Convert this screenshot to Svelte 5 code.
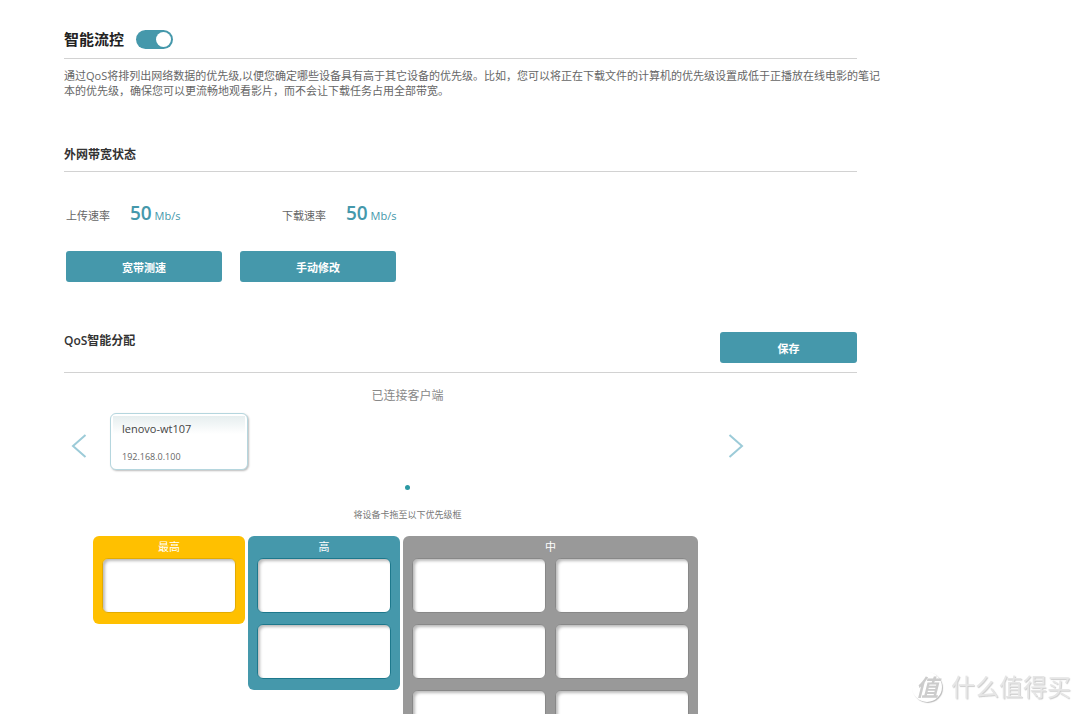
<script lang="ts">
	let enabled = $state(true);

	const rates = [
		{ label: '上传速率', value: 50 },
		{ label: '下载速率', value: 50 }
	];

	const clients = [{ name: 'lenovo-wt107', ip: '192.168.0.100' }];

	const levels = [
		{ name: '最高', kind: 'highest', slots: 1 },
		{ name: '高', kind: 'high', slots: 2 },
		{ name: '中', kind: 'medium', slots: 6 }
	];
</script>

<div class="page">
	<main class="content">
		<header class="title-row">
			<h1>智能流控</h1>
			<label class="switch">
				<input type="checkbox" aria-label="智能流控" bind:checked={enabled} />
				<span class="knob"></span>
			</label>
		</header>
		<p class="intro">
			通过QoS将排列出网络数据的优先级,以便您确定哪些设备具有高于其它设备的优先级。比如，您可以将正在下载文件的计算机的优先级设置成低于正播放在线电影的笔记本的优先级，确保您可以更流畅地观看影片，而不会让下载任务占用全部带宽。
		</p>

		<section class="bandwidth">
			<h2>外网带宽状态</h2>
			<div class="rates">
				{#each rates as rate}
					<div class="rate">
						<span class="rate-label">{rate.label}</span>
						<span class="rate-value"><strong>{rate.value}</strong> Mb/s</span>
					</div>
				{/each}
			</div>
			<div class="actions">
				<button class="btn">宽带测速</button>
				<button class="btn">手动修改</button>
			</div>
		</section>

		<section class="qos">
			<div class="qos-head">
				<h2>QoS智能分配</h2>
				<button class="btn save">保存</button>
			</div>

			<div class="clients">
				<h3>已连接客户端</h3>
				<div class="carousel">
					<button class="arrow" aria-label="上一页">
						<svg width="16" height="26" viewBox="0 0 16 26"><path d="M14.5 2 2 13l12.5 11" /></svg>
					</button>
					<div class="cards">
						{#each clients as client}
							<div class="card" draggable="true" role="listitem">
								<span class="card-name">{client.name}</span>
								<span class="card-ip">{client.ip}</span>
							</div>
						{/each}
					</div>
					<button class="arrow" aria-label="下一页">
						<svg width="16" height="26" viewBox="0 0 16 26"><path d="M1.5 2 14 13 1.5 24" /></svg>
					</button>
				</div>
				<span class="dot"></span>
				<p class="hint">将设备卡拖至以下优先级框</p>
			</div>

			<div class="levels">
				{#each levels as level}
					<div class="level {level.kind}">
						<h4>{level.name}</h4>
						<div class="slots">
							{#each Array(level.slots) as _}
								<div class="slot"></div>
							{/each}
						</div>
					</div>
				{/each}
			</div>
		</section>
	</main>

	<div class="watermark">
		<span class="seal">值</span>
		<span>什么值得买</span>
	</div>
</div>

<style>
	:global(body) {
		margin: 0;
		background: #fff;
	}
	.page {
		height: 100vh;
		overflow-y: auto;
		scrollbar-width: none;
		font-family: 'Open Sans', 'Noto Sans CJK SC', sans-serif;
		font-size: 11px;
		color: #666;
	}
	.content {
		max-width: 793px;
		padding: 24px 64px 0;
	}
	h1,
	h2,
	h3,
	h4,
	p {
		margin: 0;
	}
	button {
		font-family: inherit;
		border: 0;
		padding: 0;
		cursor: pointer;
	}

	.title-row {
		display: flex;
		align-items: center;
		gap: 12px;
		height: 30px;
		padding-bottom: 4px;
		border-bottom: 1px solid #d2d2d2;
	}
	h1 {
		font-size: 15px;
		line-height: 30px;
		color: #222;
	}
	.switch {
		display: flex;
		position: relative;
		width: 37px;
		height: 19px;
	}
	.switch input {
		appearance: none;
		width: 100%;
		margin: 0;
		border-radius: 10px;
		background: #bbb;
		cursor: pointer;
	}
	.switch input:checked {
		background: #4598ab;
	}
	.knob {
		position: absolute;
		top: 2px;
		left: 2px;
		width: 15px;
		height: 15px;
		border-radius: 50%;
		background: #fff;
		pointer-events: none;
	}
	.switch input:checked + .knob {
		left: 20px;
	}
	/* slightly wider than the rule above it */
	.intro {
		margin: 9px -29px 0 0;
		line-height: 15px;
	}

	h2 {
		font-size: 12px;
		line-height: 18px;
		font-weight: 600;
		color: #333;
	}
	.bandwidth {
		margin-top: 48px;
	}
	.bandwidth h2 {
		padding-bottom: 7px;
		border-bottom: 1px solid #d2d2d2;
	}
	.rates {
		display: flex;
		margin: 27px 2px 0;
	}
	.rate {
		display: flex;
		align-items: baseline;
		gap: 20px;
		width: 216px;
		line-height: 28px;
	}
	.rate-value {
		color: #4598ab;
	}
	.rate-value strong {
		font-size: 19px;
		font-weight: 600;
	}
	.actions {
		display: flex;
		gap: 18px;
		margin: 21px 2px 0;
	}
	.btn {
		width: 156px;
		height: 31px;
		border-radius: 3px;
		background: #4598ab;
		color: #fff;
		font-size: 11px;
		font-weight: 600;
	}

	.qos {
		margin-top: 50px;
	}
	.qos-head {
		display: flex;
		justify-content: space-between;
		padding-bottom: 9px;
		border-bottom: 1px solid #d2d2d2;
	}
	.btn.save {
		width: 137px;
	}
	.clients {
		display: flex;
		flex-direction: column;
		align-items: center;
		max-width: 687px;
	}
	h3 {
		margin-top: 14px;
		font-size: 12px;
		line-height: 18px;
		font-weight: 400;
		color: #888;
	}
	.carousel {
		display: flex;
		align-items: center;
		gap: 23px;
		box-sizing: border-box;
		width: 100%;
		margin-top: 8px;
		padding: 0 7px;
	}
	.arrow {
		display: flex;
		padding-top: 8px;
		background: none;
	}
	.arrow path {
		fill: none;
		stroke: #9ccbd8;
		stroke-width: 2;
	}
	.cards {
		display: flex;
		flex: 1;
	}
	.card {
		display: flex;
		flex-direction: column;
		justify-content: space-between;
		box-sizing: border-box;
		width: 138px;
		height: 57px;
		padding: 6px 11px 4px;
		border: 1px solid #b5d6de;
		border-radius: 6px;
		background: linear-gradient(#e6eeef, #fff) 2px 2px / 132px 18px no-repeat #fff;
		box-shadow: 1px 1px 2px #bbb;
	}
	.card-name {
		font-size: 11px;
		line-height: 18px;
		color: #444;
	}
	.card-ip {
		font-size: 9px;
		line-height: 16px;
		color: #666;
	}
	.dot {
		width: 5px;
		height: 5px;
		margin-top: 15px;
		border-radius: 50%;
		background: #2b99a3;
	}
	.hint {
		margin-top: 17px;
		font-size: 9px;
		line-height: 16px;
		color: #777;
	}

	.levels {
		display: flex;
		align-items: flex-start;
		gap: 3px;
		margin: 13px 0 0 29px;
	}
	.level {
		padding: 0 9px 11px;
		border-radius: 6px;
	}
	h4 {
		font-size: 11px;
		line-height: 22px;
		font-weight: 400;
		text-align: center;
		color: #fff;
	}
	.slots {
		display: grid;
		grid-template-columns: 134px;
		gap: 11px 9px;
	}
	.slot {
		box-sizing: border-box;
		height: 55px;
		border: 1px solid #888;
		border-radius: 6px;
		background: #fff;
		box-shadow: inset 2px 2px 3px #bbb;
	}
	.highest {
		background: #ffc000;
	}
	.highest .slot {
		border-color: #e3ab00;
	}
	.high {
		background: #4598ab;
	}
	.high .slot {
		border-color: #1d788c;
	}
	.medium {
		background: #999;
	}
	.medium .slots {
		grid-template-columns: 134px 134px;
	}

	.watermark {
		position: fixed;
		right: 9px;
		bottom: 10px;
		display: flex;
		align-items: center;
		gap: 9px;
		font-size: 24px;
		line-height: 34px;
		color: #e6e6e6;
		text-shadow: 1px 1px 1px #ccc;
	}
	.seal {
		width: 30px;
		height: 30px;
		border-radius: 50%;
		box-shadow: 1px 1px 1px #bbb;
		font-size: 23px;
		font-style: italic;
		font-weight: 700;
		line-height: 30px;
		text-align: center;
		color: #ccc;
		text-shadow: none;
	}
</style>
